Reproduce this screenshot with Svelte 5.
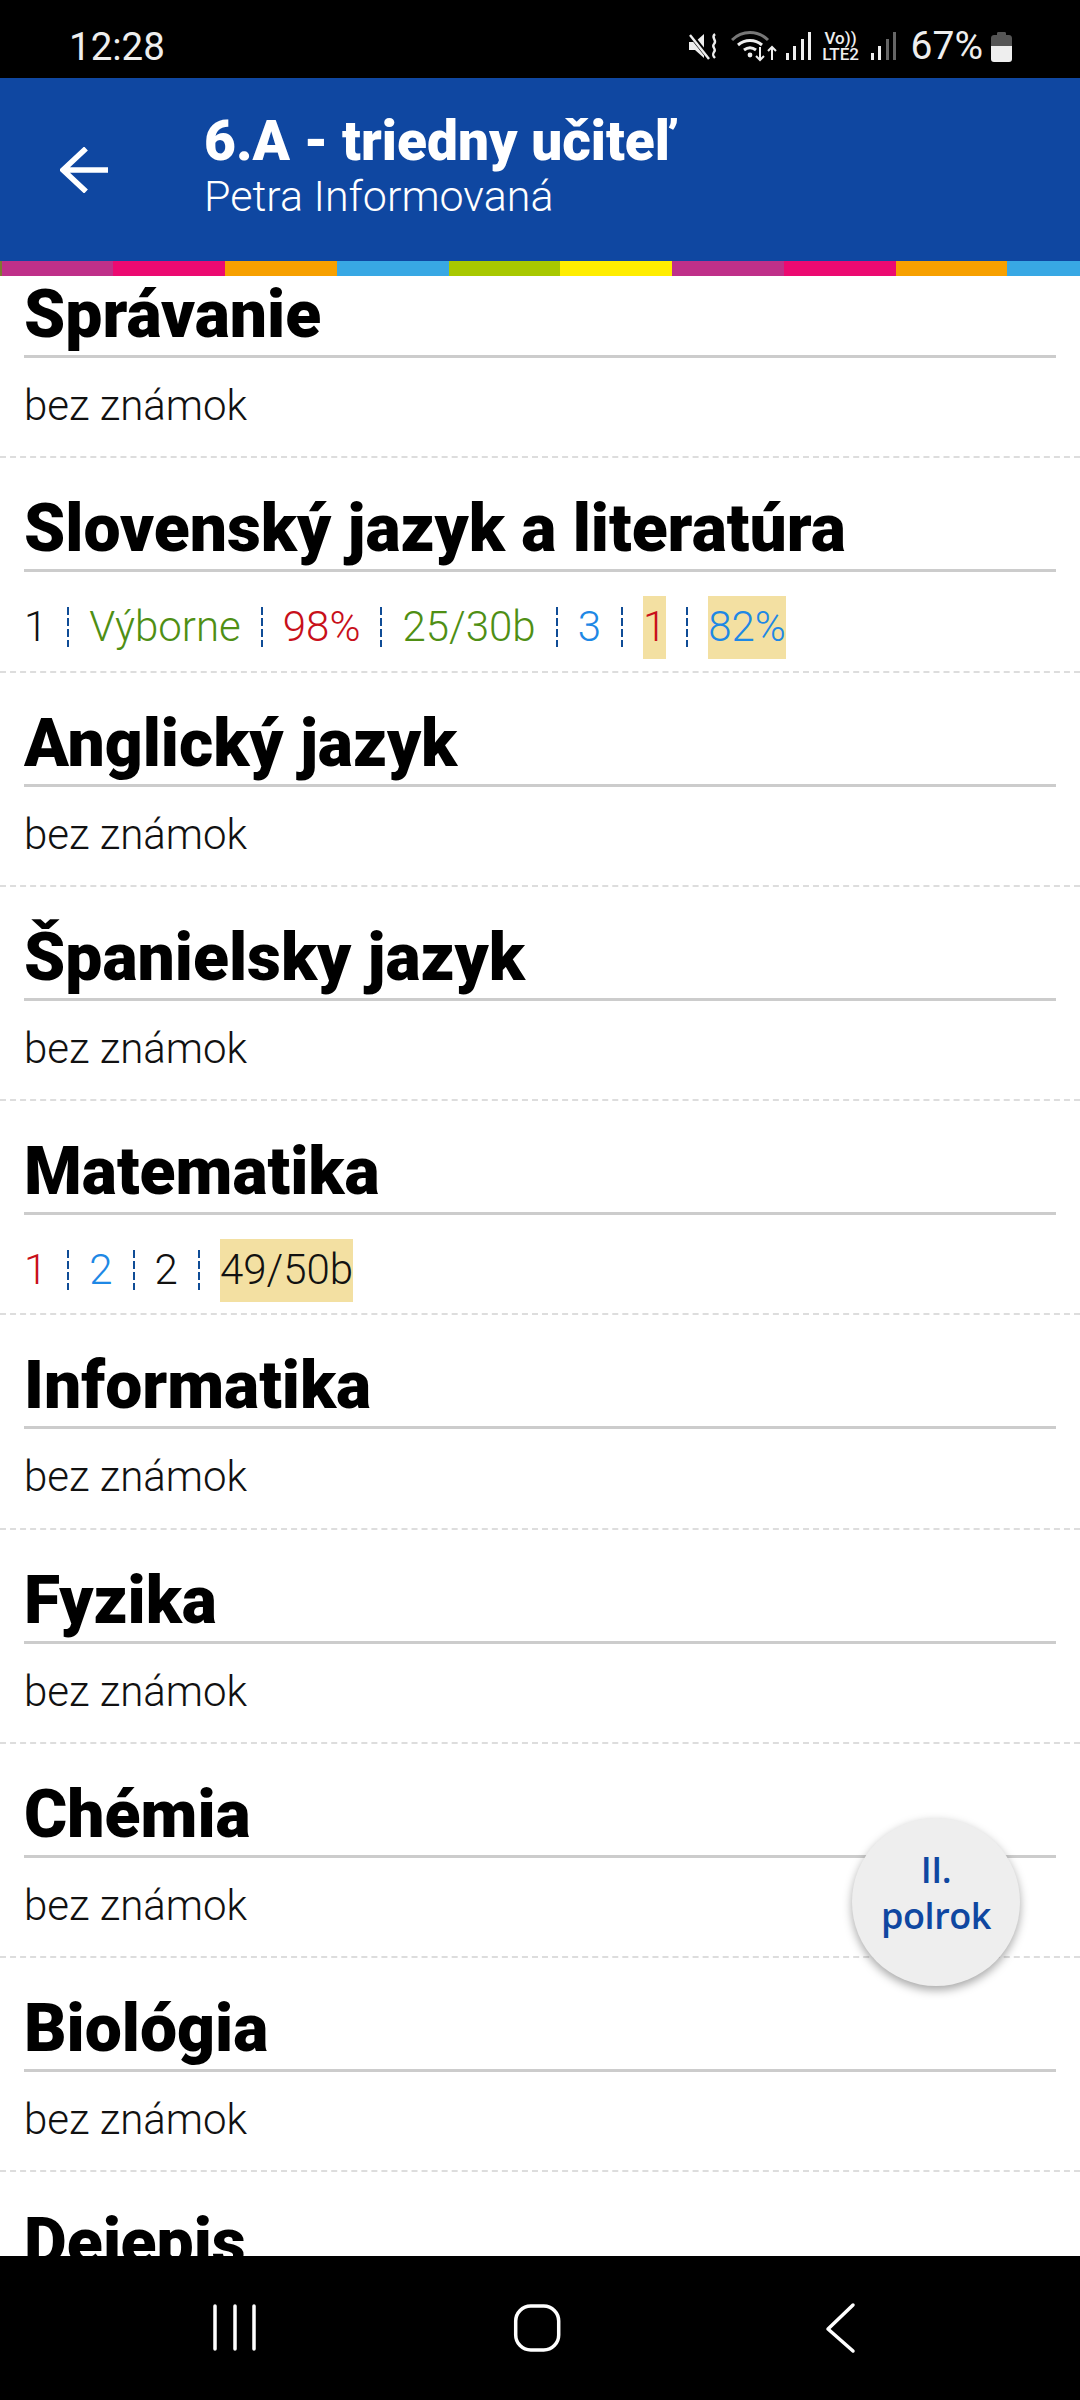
<script>
  const stripes = [
    { w: 1.6, c: "olive" },
    { w: 111.75, c: "magenta" },
    { w: 111.75, c: "pink" },
    { w: 111.75, c: "orange" },
    { w: 111.75, c: "sky" },
    { w: 111.75, c: "lime" },
    { w: 111.75, c: "yellow" },
    { w: 111.75, c: "magenta" },
    { w: 111.75, c: "pink" },
    { w: 111.75, c: "orange" },
    { w: 72.4, c: "sky" },
  ];

  // each grade: text, colour class, highlighted or not
  const subjects = [
    { name: "Správanie", grades: [] },
    {
      name: "Slovenský jazyk a literatúra",
      grades: [
        { t: "1", c: "black" },
        { t: "Výborne", c: "green" },
        { t: "98%", c: "red" },
        { t: "25/30b", c: "green" },
        { t: "3", c: "blue" },
        { t: "1", c: "red", hl: true },
        { t: "82%", c: "blue", hl: true },
      ],
    },
    { name: "Anglický jazyk", grades: [] },
    { name: "Španielsky jazyk", grades: [] },
    {
      name: "Matematika",
      grades: [
        { t: "1", c: "red" },
        { t: "2", c: "blue" },
        { t: "2", c: "black" },
        { t: "49/50b", c: "black", hl: true },
      ],
    },
    { name: "Informatika", grades: [] },
    { name: "Fyzika", grades: [] },
    { name: "Chémia", grades: [] },
    { name: "Biológia", grades: [] },
    { name: "Dejepis", grades: [] },
  ];
</script>

<div class="screen">
  <!-- status bar -->
  <div class="status">
    <span class="time">12:28</span>
    <div class="status-icons">
      <svg class="mute" viewBox="0 0 32 30" width="32" height="30">
        <path d="M1 11h6l9-8v24l-9-8H1z" fill="#eee" />
        <path d="M2 3l20 25" stroke="#000" stroke-width="5" />
        <path d="M2 4l19 24" stroke="#eee" stroke-width="2.4" />
        <path d="M27 3c-5 4 3 6-1 10-3 3 3 5 0 8-1 2-2 3 1 6" fill="none" stroke="#eee" stroke-width="2.4" />
      </svg>
      <svg class="wifi" viewBox="0 0 46 32" width="46" height="32">
        <path d="M1 10C11 0 27 0 37 10" fill="none" stroke="#777" stroke-width="3" />
        <path d="M7 15c7-6 17-6 24 0" fill="none" stroke="#eee" stroke-width="3" />
        <path d="M13 20c4-3 8-3 12 0" fill="none" stroke="#eee" stroke-width="3" />
        <circle cx="19" cy="25" r="2.4" fill="#eee" />
        <path d="M29 17v13M25 26l4 4 4-4" fill="none" stroke="#eee" stroke-width="2" />
        <path d="M41 30V17M37 21l4-4 4 4" fill="none" stroke="#eee" stroke-width="2" />
      </svg>
      <svg class="bars" viewBox="0 0 27 30" width="27" height="30">
        <rect x="1" y="22" width="3" height="7" fill="#eee" />
        <rect x="8" y="15" width="3" height="14" fill="#eee" />
        <rect x="16" y="8" width="3" height="21" fill="#eee" />
        <rect x="23" y="1" width="3" height="28" fill="#eee" />
      </svg>
      <div class="volte"><span>Vo))</span><span>LTE2</span></div>
      <svg class="bars second" viewBox="0 0 27 30" width="27" height="30">
        <rect x="1" y="22" width="3" height="7" fill="#eee" />
        <rect x="8" y="15" width="3" height="14" fill="#eee" />
        <rect x="16" y="8" width="3" height="21" fill="#666" />
        <rect x="23" y="1" width="3" height="28" fill="#666" />
      </svg>
      <span class="percent">67%</span>
      <svg class="battery" viewBox="0 0 21 32" width="21" height="32">
        <path d="M6 3.500c0-1 .5-1.500 1.500-1.500h6c1 0 1.500.5 1.500 1.500V5h3c1.500 0 3 1 3 3v9H0V8c0-2 1.500-3 3-3h3z" fill="#555" />
        <path d="M0 16h21v13c0 2-1 3-3 3H3c-2 0-3-1-3-3z" fill="#eee" />
      </svg>
    </div>
  </div>

  <!-- header -->
  <header class="header">
    <svg class="back" viewBox="0 0 48 46" width="48" height="46">
      <path d="M48 23H3M26 1.500L3 23l23 21.500" fill="none" stroke="#fff" stroke-width="5.500" />
    </svg>
    <div class="titles">
      <div class="title">6.A - triedny učiteľ</div>
      <div class="subtitle">Petra Informovaná</div>
    </div>
  </header>

  <div class="stripe">
    {#each stripes as s}
      <span class={s.c} style="width:{s.w}px"></span>
    {/each}
  </div>

  <!-- subjects list -->
  <main class="list">
    <div class="list-inner">
      {#each subjects as sub}
        <section class="row">
          <h2>{sub.name}</h2>
          {#if sub.grades.length === 0}
            <div class="grades">
              <span class="none">bez známok</span>
            </div>
          {:else}
            <div class="grades marks">
              {#each sub.grades as g, i}
                {#if i > 0}<i class="sep"></i>{/if}
                <span class="grade {g.c}" class:hl={g.hl}>{g.t}</span>
              {/each}
            </div>
          {/if}
        </section>
      {/each}
    </div>
    <button class="fab">II.<br />polrok</button>
  </main>

  <!-- android nav -->
  <nav class="nav">
    <svg viewBox="0 0 1080 144" width="1080" height="144">
      <g fill="none" stroke="#fff" stroke-width="3.500" stroke-linecap="round">
        <path d="M215 50v43M235 50v43M254 50v43" />
        <rect x="515.700" y="50" width="43" height="44" rx="15" />
        <path d="M853 49l-25 24 25 22" stroke-linejoin="round" />
      </g>
    </svg>
  </nav>
</div>

<style>
  :global(body) {
    margin: 0;
    background: #fff;
  }

  .screen {
    width: 1080px;
    height: 2400px;
    display: flex;
    flex-direction: column;
    overflow: hidden;
    font-family: Roboto, sans-serif;
  }

  /* ---------- status bar ---------- */
  .status {
    height: 78px;
    flex: none;
    background: #000;
    color: #eee;
    display: flex;
    align-items: center;
    justify-content: space-between;
    padding: 14px 68px 0 69px;
    box-sizing: border-box;
  }
  .time {
    font-size: 38.5px;
    font-weight: 400;
  }
  .status-icons {
    display: flex;
    align-items: center;
  }
  .status-icons svg {
    display: block;
  }
  .wifi {
    margin-left: 11px;
  }
  .bars {
    margin-left: 8px;
  }
  .bars.second {
    margin-left: 9px;
  }
  .volte {
    margin-left: 9px;
    width: 40px;
    display: flex;
    flex-direction: column;
    align-items: center;
    font-size: 17px;
    font-weight: 500;
    line-height: 16px;
  }
  .percent {
    margin-left: 14px;
    font-size: 39px;
  }
  .battery {
    margin-left: 8px;
  }

  /* ---------- header ---------- */
  .header {
    height: 183px;
    flex: none;
    background: #0f47a1;
    color: #fff;
    display: flex;
    align-items: center;
    padding-left: 60px;
    box-sizing: border-box;
  }
  .back {
    display: block;
    margin-right: 96px;
  }
  .titles {
    display: flex;
    flex-direction: column;
  }
  .title {
    font-size: 55px;
    font-weight: 900;
    line-height: 56px;
    margin-top: -3px;
  }
  .subtitle {
    font-size: 43px;
    font-weight: 300;
    line-height: 54px;
  }

  .stripe {
    height: 15px;
    flex: none;
    display: flex;
  }
  .stripe span {
    display: block;
    flex: none;
  }
  .olive { background: #7d7a30; }
  .magenta { background: #bf3089; }
  .pink { background: #ec0a71; }
  .orange { background: #f7a000; }
  .sky { background: #38a8e4; }
  .lime { background: #a8c800; }
  .yellow { background: #ffed00; }

  /* ---------- list ---------- */
  .list {
    flex: 1;
    min-height: 0;
    position: relative;
    overflow: hidden;
    background: #fff;
  }
  .list-inner {
    margin-top: -32px;
  }
  .row {
    height: 214.28px;
    box-sizing: border-box;
    border-bottom: 2px dashed #ddd;
    display: flex;
    flex-direction: column;
  }
  h2 {
    margin: 0 24px;
    height: 114px;
    box-sizing: border-box;
    flex: none;
    border-bottom: 3px solid #ccc;
    color: #000;
    font-size: 66px;
    font-weight: 900;
    line-height: 75px;
    padding-top: 33px;
  }
  .grades {
    flex: 1;
    display: flex;
    align-items: center;
    padding: 0 24px 3px;
    font-size: 42px;
    font-weight: 300;
    line-height: 61px;
  }
  .grades.marks {
    padding-top: 12px;
    padding-bottom: 0;
  }
  .none {
    color: #111;
  }
  .grade {
    display: block;
    height: 63px;
  }
  .grade.hl {
    background: #f3e0a2;
  }
  .sep {
    display: block;
    flex: none;
    width: 2px;
    height: 40px;
    margin: 0 20px;
    background: repeating-linear-gradient(to bottom, #0f4c96 0 8px, transparent 8px 11px);
  }
  .black { color: #111; }
  .green { color: #4f8f14; }
  .red { color: #c8101a; }
  .blue { color: #1e88e5; }

  .fab {
    position: absolute;
    left: 852px;
    top: 1542px;
    width: 168px;
    height: 168px;
    padding: 0 0 18px;
    border: 0;
    border-radius: 50%;
    background: #eee;
    color: #0f47a1;
    font-family: "Open Sans", sans-serif;
    font-size: 36px;
    font-weight: 600;
    letter-spacing: -0.4px;
    line-height: 46px;
    text-align: center;
    box-shadow: 0 4px 10px rgba(0, 0, 0, 0.35);
  }

  /* ---------- nav ---------- */
  .nav {
    height: 144px;
    flex: none;
    background: #000;
  }
  .nav svg {
    display: block;
  }
</style>
